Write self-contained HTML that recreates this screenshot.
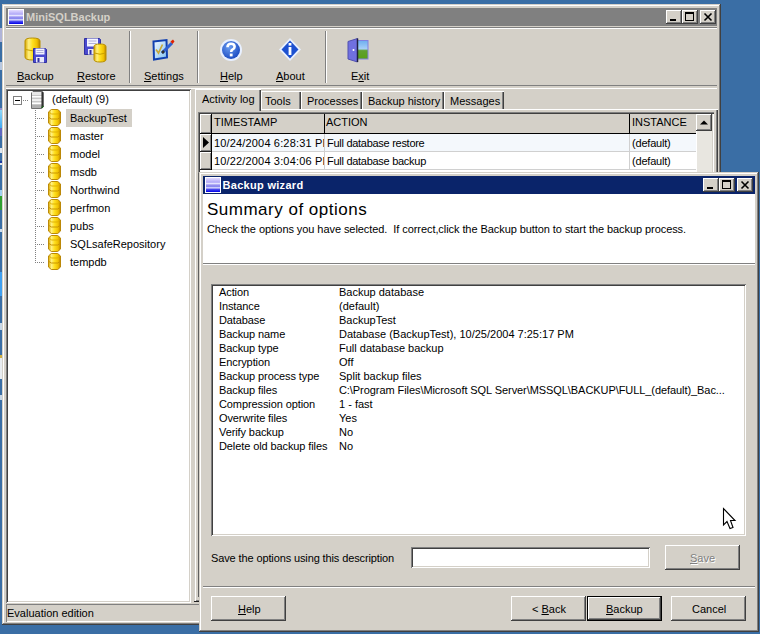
<!DOCTYPE html>
<html><head><meta charset="utf-8">
<style>
*{margin:0;padding:0;box-sizing:border-box}
html,body{width:760px;height:634px;overflow:hidden;background:#3A6EA5;font-family:"Liberation Sans",sans-serif;font-size:11px;color:#000}
.a{position:absolute}
.face{background:#D4D0C8}
.win{box-shadow:inset -1px -1px #404040,inset 1px 1px #D4D0C8,inset -2px -2px #808080,inset 2px 2px #FFFFFF;background:#D4D0C8}
.btn{box-shadow:inset -1px -1px #404040,inset 1px 1px #FFFFFF,inset -2px -2px #808080,inset 2px 2px #D4D0C8;background:#D4D0C8}
.sunk{box-shadow:inset 1px 1px #808080,inset -1px -1px #FFFFFF,inset 2px 2px #404040,inset -2px -2px #D4D0C8;background:#fff}
.t{position:absolute;white-space:nowrap;line-height:13px}
.cap{position:absolute;width:16px;height:14px}
u{text-decoration:underline;text-decoration-thickness:1px;text-underline-offset:1px}
</style></head><body>

<svg width="0" height="0" style="position:absolute">
<defs>
 <linearGradient id="gold" x1="0" y1="0" x2="1" y2="0">
  <stop offset="0" stop-color="#D8A800"/><stop offset=".25" stop-color="#FFF080"/><stop offset=".5" stop-color="#FFE020"/><stop offset=".8" stop-color="#F0C000"/><stop offset="1" stop-color="#B88000"/>
 </linearGradient>
 <linearGradient id="silver" x1="0" y1="0" x2="1" y2="0">
  <stop offset="0" stop-color="#909090"/><stop offset=".4" stop-color="#E8E8E8"/><stop offset="1" stop-color="#A0A0A0"/>
 </linearGradient>
 <symbol id="db" viewBox="0 0 14 17">
  <path d="M3.5 0.5 L10.5 0.5 L13.5 3 L13.5 14 L10.5 16.5 L3.5 16.5 L0.5 14 L0.5 3 Z" fill="url(#gold)" stroke="#B88400" stroke-width="1"/>
  <path d="M1.5 3.5 L4 5 L10 5 L12.5 3.5" fill="none" stroke="#E0B000" stroke-width="1"/>
  <path d="M1 8.5 L3.5 10 L10.5 10 L13 8.5" fill="none" stroke="#C89400" stroke-width="1"/>
 </symbol>
</defs></svg>
<!-- desktop icon fragments -->
<div class="a" style="left:0;top:28px;width:2px;height:14px;background:#B0B4D8"></div>
<div class="a" style="left:0;top:62px;width:2px;height:8px;background:#B8C8E0"></div>
<div class="a" style="left:0;top:108px;width:2px;height:2px;background:#9090D0"></div>
<div class="a" style="left:0;top:110px;width:2px;height:18px;background:linear-gradient(#90D8F8,#40A8F0)"></div>
<div class="a" style="left:0;top:128px;width:2px;height:8px;background:#6068C0"></div>
<div class="a" style="left:0;top:148px;width:2px;height:5px;background:#E0E8F0"></div>
<div class="a" style="left:0;top:161px;width:2px;height:2px;background:#1838A0"></div>
<div class="a" style="left:0;top:163px;width:2px;height:2px;background:#E0E8F0"></div>
<div class="a" style="left:0;top:190px;width:2px;height:6px;background:#A0D0F0"></div>
<div class="a" style="left:0;top:196px;width:2px;height:14px;background:#30A030"></div>
<div class="a" style="left:0;top:229px;width:2px;height:3px;background:#D0E0F0"></div>
<div class="a" style="left:0;top:272px;width:2px;height:24px;background:#40A0F0"></div>
<div class="a" style="left:0;top:323px;width:2px;height:7px;background:#C8D8E8"></div>
<div class="a" style="left:0;top:355px;width:2px;height:3px;background:#D0B040"></div>
<div class="a" style="left:0;top:358px;width:2px;height:21px;background:#E8ECF0"></div>
<div class="a" style="left:0;top:395px;width:2px;height:5px;background:#C8D8E8"></div>
<!-- ============ MAIN WINDOW ============ -->
<div class="a win" style="left:2px;top:4px;width:719px;height:621px"></div>
<!-- title bar -->
<div class="a" style="left:6px;top:8px;width:711px;height:18px;background:#808080"></div>
<svg class="a" style="left:8px;top:9px" width="16" height="16" viewBox="0 0 16 16">
 <defs><linearGradient id="ig" x1="0" y1="0" x2="0" y2="1"><stop offset="0" stop-color="#E4DCFF"/><stop offset=".3" stop-color="#B0A8F8"/><stop offset=".4" stop-color="#E8E8FF"/><stop offset=".5" stop-color="#9890F0"/><stop offset=".62" stop-color="#8888F0"/><stop offset=".7" stop-color="#E4E4FF"/><stop offset=".8" stop-color="#5050F0"/><stop offset="1" stop-color="#0000E8"/></linearGradient></defs>
 <rect x="0" y="0" width="16" height="16" fill="#fff"/><rect x="1" y="1" width="14" height="14" fill="url(#ig)"/>
</svg>
<div class="t" style="left:26px;top:11px;font-weight:bold;color:#D4D0C8">MiniSQLBackup</div>
<!-- caption buttons -->
<div class="cap btn" style="left:666px;top:10px"></div>
<div class="a" style="left:670px;top:19px;width:6px;height:2px;background:#000"></div>
<div class="cap btn" style="left:682px;top:10px"></div>
<div class="a" style="left:685px;top:12px;width:9px;height:9px;border:1px solid #000;border-top-width:2px"></div>
<div class="cap btn" style="left:700px;top:10px"></div>
<svg class="a" style="left:700px;top:10px" width="16" height="14"><path d="M4.5 3.5 L11.5 10.5 M11.5 3.5 L4.5 10.5" stroke="#000" stroke-width="1.6"/></svg>

<!-- toolbar etched top -->
<div class="a" style="left:6px;top:27px;width:711px;height:1px;background:#808080"></div>
<div class="a" style="left:6px;top:28px;width:711px;height:1px;background:#fff"></div>
<!-- toolbar bottom etched -->
<div class="a" style="left:6px;top:85px;width:711px;height:1px;background:#808080"></div>
<div class="a" style="left:6px;top:88px;width:711px;height:1px;background:#fff"></div>
<!-- separators -->
<div class="a" style="left:129px;top:31px;width:1px;height:52px;background:#808080"></div>
<div class="a" style="left:130px;top:31px;width:1px;height:52px;background:#fff"></div>
<div class="a" style="left:197px;top:31px;width:1px;height:52px;background:#808080"></div>
<div class="a" style="left:198px;top:31px;width:1px;height:52px;background:#fff"></div>
<div class="a" style="left:325px;top:31px;width:1px;height:52px;background:#808080"></div>
<div class="a" style="left:326px;top:31px;width:1px;height:52px;background:#fff"></div>

<!-- toolbar labels -->
<div class="t" style="left:17px;top:70px"><u>B</u>ackup</div>
<div class="t" style="left:77px;top:70px"><u>R</u>estore</div>
<div class="t" style="left:144px;top:70px"><u>S</u>ettings</div>
<div class="t" style="left:220px;top:70px"><u>H</u>elp</div>
<div class="t" style="left:276px;top:70px"><u>A</u>bout</div>
<div class="t" style="left:351px;top:70px">E<u>x</u>it</div>


<!-- Backup icon -->
<svg class="a" style="left:24px;top:37px" width="24" height="26" viewBox="0 0 24 26">
 <path d="M1 4 Q1 1 8.5 1 Q16 1 16 4 L16 20 Q16 23 8.5 23 Q1 23 1 20Z" fill="url(#gold)" stroke="#B89000" stroke-width="1"/>
 <path d="M1.5 12.5 Q8.5 15 15.5 12.5" fill="none" stroke="#C8A000" stroke-width="1"/>
 <path d="M9.5 11.5 L21.5 11.5 L22.5 12.5 L22.5 25.5 L9.5 25.5Z" fill="#4A4ACF" stroke="#3030A0" stroke-width="1"/>
 <rect x="11.5" y="11.5" width="9" height="6" fill="#F4F4FF"/>
 <path d="M12.5 13.5 h7 M12.5 15.5 h7" stroke="#A0A0D0" stroke-width="0.8"/>
 <rect x="12" y="20" width="8" height="5.5" fill="#E8E8F8"/>
 <rect x="13.5" y="21" width="2" height="4" fill="#3030A0"/>
</svg>
<!-- Restore icon -->
<svg class="a" style="left:84px;top:37px" width="24" height="26" viewBox="0 0 24 26">
 <path d="M0.5 1.5 L15.5 1.5 L16.5 2.5 L16.5 17.5 L0.5 17.5Z" fill="#4A4ACF" stroke="#3030A0" stroke-width="1"/>
 <rect x="3" y="1.5" width="11" height="8" fill="#F4F4FF"/>
 <path d="M4.5 4 h8 M4.5 6.5 h8" stroke="#A0A0D0" stroke-width="0.8"/>
 <rect x="4" y="12" width="8" height="5.5" fill="#E8E8F8"/>
 <rect x="5.5" y="13" width="2" height="4.5" fill="#3030A0"/>
 <path d="M10 9.5 Q10 7 16 7 Q22 7 22 9.5 L22 22.5 Q22 25 16 25 Q10 25 10 22.5Z" fill="url(#gold)" stroke="#B89000" stroke-width="1"/>
 <path d="M10.5 16 Q16 18.5 21.5 16" fill="none" stroke="#C8A000" stroke-width="1"/>
</svg>
<!-- Settings icon -->
<svg class="a" style="left:150px;top:37px" width="26" height="26" viewBox="0 0 26 26">
 <defs><linearGradient id="sbox" x1="0" y1="0" x2="1" y2="1"><stop offset="0" stop-color="#F4FAFF"/><stop offset="1" stop-color="#80C0F0"/></linearGradient></defs>
 <path d="M3.5 4.5 L16.5 3 L17 20.5 L4 22.5Z" fill="url(#sbox)" stroke="#1040B0" stroke-width="2"/>
 <path d="M6 12.5 L8.5 16 L12.5 7.5" fill="none" stroke="#C8A838" stroke-width="1.7"/>
 <path d="M12 16 L22 6" stroke="#3060D0" stroke-width="3"/>
 <path d="M12 16 L14 14" stroke="#303030" stroke-width="2.5"/>
 <path d="M20.5 4.5 L23 2.5 L24.5 4.5 L22.5 7Z" fill="#E02000"/>
</svg>
<!-- Help icon -->
<svg class="a" style="left:219px;top:38px" width="24" height="24" viewBox="0 0 24 24">
 <defs><radialGradient id="hb" cx=".4" cy=".35" r=".7"><stop offset="0" stop-color="#6A9CF0"/><stop offset="1" stop-color="#1848C0"/></radialGradient></defs>
 <circle cx="12" cy="12" r="11" fill="#E8F0FF"/>
 <circle cx="12" cy="12" r="9" fill="url(#hb)"/>
 <path d="M8.5 9.2 Q8.5 5.8 12 5.8 Q15.6 5.8 15.6 8.8 Q15.6 10.6 13.4 11.6 Q12.2 12.2 12.2 14" fill="none" stroke="#fff" stroke-width="2.6"/>
 <rect x="10.8" y="15.6" width="2.8" height="2.8" fill="#fff"/>
</svg>
<!-- About icon -->
<svg class="a" style="left:278px;top:37px" width="24" height="25" viewBox="0 0 24 25">
 <path d="M12 1 L23 12.5 L12 24 L1 12.5Z" fill="#E8F0FF"/>
 <path d="M12 3.5 L20.5 12.5 L12 21.5 L3.5 12.5Z" fill="#1C50D0"/>
 <rect x="10.6" y="10" width="2.8" height="8" fill="#fff"/>
 <rect x="10.6" y="6" width="2.8" height="2.6" fill="#fff"/>
</svg>
<!-- Exit icon -->
<svg class="a" style="left:346px;top:37px" width="24" height="26" viewBox="0 0 24 26">
 <defs><linearGradient id="sky" x1="0" y1="0" x2="0" y2="1"><stop offset="0" stop-color="#70B0F0"/><stop offset=".45" stop-color="#A8D0F8"/><stop offset=".55" stop-color="#60A030"/><stop offset="1" stop-color="#58A018"/></linearGradient></defs>
 <rect x="11" y="3" width="11.5" height="19.5" fill="#8080E0"/>
 <rect x="12" y="4" width="9.5" height="17.5" fill="url(#sky)"/>
 <path d="M2 4.5 L11.5 1.5 L11.5 25 L2 22Z" fill="#7070E0" stroke="#5050B0" stroke-width="1"/>
 <path d="M11.5 1.5 L11.5 25" stroke="#202040" stroke-width="1.5"/>
 <circle cx="7.5" cy="13" r="1" fill="#fff"/>
</svg>


<!-- tree view -->
<div class="a sunk" style="left:6px;top:89px;width:185px;height:514px"></div>


<!-- tree content -->
<div class="a" style="left:66px;top:109px;width:66px;height:18px;background:#D4D0C8"></div>

<div class="a" style="left:13px;top:96px;width:9px;height:9px;border:1px solid #808080;background:#fff"></div>
<div class="a" style="left:15px;top:100px;width:5px;height:1px;background:#000"></div>
<div class="a" style="left:23px;top:100px;width:6px;height:1px;background-image:linear-gradient(90deg,#808080 50%,transparent 50%);background-size:2px 1px"></div>
<div class="a" style="left:35px;top:108px;width:1px;height:155px;background-image:linear-gradient(180deg,#808080 50%,transparent 50%);background-size:1px 2px"></div>
<div class="a" style="left:35px;top:118px;width:9px;height:1px;background-image:linear-gradient(90deg,#808080 50%,transparent 50%);background-size:2px 1px"></div><svg class="a" style="left:48px;top:109px" width="13" height="17" viewBox="0 0 14 17" preserveAspectRatio="none"><use href="#db"/></svg><div class="t" style="left:70px;top:112px">BackupTest</div>
<div class="a" style="left:35px;top:136px;width:9px;height:1px;background-image:linear-gradient(90deg,#808080 50%,transparent 50%);background-size:2px 1px"></div><svg class="a" style="left:48px;top:127px" width="13" height="17" viewBox="0 0 14 17" preserveAspectRatio="none"><use href="#db"/></svg><div class="t" style="left:70px;top:130px">master</div>
<div class="a" style="left:35px;top:154px;width:9px;height:1px;background-image:linear-gradient(90deg,#808080 50%,transparent 50%);background-size:2px 1px"></div><svg class="a" style="left:48px;top:145px" width="13" height="17" viewBox="0 0 14 17" preserveAspectRatio="none"><use href="#db"/></svg><div class="t" style="left:70px;top:148px">model</div>
<div class="a" style="left:35px;top:172px;width:9px;height:1px;background-image:linear-gradient(90deg,#808080 50%,transparent 50%);background-size:2px 1px"></div><svg class="a" style="left:48px;top:163px" width="13" height="17" viewBox="0 0 14 17" preserveAspectRatio="none"><use href="#db"/></svg><div class="t" style="left:70px;top:166px">msdb</div>
<div class="a" style="left:35px;top:190px;width:9px;height:1px;background-image:linear-gradient(90deg,#808080 50%,transparent 50%);background-size:2px 1px"></div><svg class="a" style="left:48px;top:181px" width="13" height="17" viewBox="0 0 14 17" preserveAspectRatio="none"><use href="#db"/></svg><div class="t" style="left:70px;top:184px">Northwind</div>
<div class="a" style="left:35px;top:208px;width:9px;height:1px;background-image:linear-gradient(90deg,#808080 50%,transparent 50%);background-size:2px 1px"></div><svg class="a" style="left:48px;top:199px" width="13" height="17" viewBox="0 0 14 17" preserveAspectRatio="none"><use href="#db"/></svg><div class="t" style="left:70px;top:202px">perfmon</div>
<div class="a" style="left:35px;top:226px;width:9px;height:1px;background-image:linear-gradient(90deg,#808080 50%,transparent 50%);background-size:2px 1px"></div><svg class="a" style="left:48px;top:217px" width="13" height="17" viewBox="0 0 14 17" preserveAspectRatio="none"><use href="#db"/></svg><div class="t" style="left:70px;top:220px">pubs</div>
<div class="a" style="left:35px;top:244px;width:9px;height:1px;background-image:linear-gradient(90deg,#808080 50%,transparent 50%);background-size:2px 1px"></div><svg class="a" style="left:48px;top:235px" width="13" height="17" viewBox="0 0 14 17" preserveAspectRatio="none"><use href="#db"/></svg><div class="t" style="left:70px;top:238px">SQLsafeRepository</div>
<div class="a" style="left:35px;top:262px;width:9px;height:1px;background-image:linear-gradient(90deg,#808080 50%,transparent 50%);background-size:2px 1px"></div><svg class="a" style="left:48px;top:253px" width="13" height="17" viewBox="0 0 14 17" preserveAspectRatio="none"><use href="#db"/></svg><div class="t" style="left:70px;top:256px">tempdb</div>

<svg class="a" style="left:31px;top:91px" width="14" height="18" viewBox="0 0 14 18">
 <path d="M0.5 2 L2 0.5 L11.5 0.5 L12.5 1.5 L12.5 15.5 L10.5 17.5 L0.5 17.5Z" fill="#C8C8C8" stroke="#707070" stroke-width="1"/>
 <rect x="1" y="1" width="10" height="3" fill="#E8E8E8"/>
 <rect x="1" y="5" width="10" height="1.5" fill="#FFFFFF"/>
 <rect x="1" y="8" width="10" height="2" fill="#F0F0F0"/>
 <rect x="1" y="11.5" width="10" height="1.5" fill="#FFFFFF"/>
 <rect x="1" y="14" width="10" height="3" fill="#B0B0B0"/>
 <path d="M11.2 1 L11.2 16.8" stroke="#202020" stroke-width="1.4"/>
 <path d="M10.5 17 L12.5 15" stroke="#206020" stroke-width="1.2"/>
</svg>
<div class="t" style="left:52px;top:93px">(default) (9)</div>

<!-- status bar -->
<div class="a" style="left:6px;top:604px;width:711px;height:18px;box-shadow:inset 1px 1px #808080,inset -1px -1px #fff"></div>
<div class="t" style="left:7px;top:607px">Evaluation edition</div>

<!-- tab control -->
<div class="a" style="left:195px;top:109px;width:523px;height:493px;box-shadow:inset 1px 1px #fff,inset -1px -1px #404040,inset -2px -2px #808080"></div>


<!-- tabs -->
<div class="a" style="left:261px;top:91px;width:40px;height:18px;box-shadow:inset 1px 1px #fff,inset -1px 0 #404040,inset -2px 0 #808080;background:#D4D0C8"></div>
<div class="t" style="left:265px;top:95px">Tools</div>
<div class="a" style="left:301px;top:91px;width:61px;height:18px;box-shadow:inset 1px 1px #fff,inset -1px 0 #404040,inset -2px 0 #808080;background:#D4D0C8"></div>
<div class="t" style="left:307px;top:95px">Processes</div>
<div class="a" style="left:362px;top:91px;width:82px;height:18px;box-shadow:inset 1px 1px #fff,inset -1px 0 #404040,inset -2px 0 #808080;background:#D4D0C8"></div>
<div class="t" style="left:368px;top:95px">Backup history</div>
<div class="a" style="left:444px;top:91px;width:60px;height:18px;box-shadow:inset 1px 1px #fff,inset -1px 0 #404040,inset -2px 0 #808080;background:#D4D0C8"></div>
<div class="t" style="left:450px;top:95px">Messages</div>
<div class="a" style="left:195px;top:89px;width:66px;height:22px;box-shadow:inset 1px 1px #fff,inset -1px 0 #404040,inset -2px 0 #808080;background:#D4D0C8"></div>
<div class="t" style="left:202px;top:93px">Activity log</div>
<!-- grid -->
<div class="a" style="left:198px;top:112px;width:516px;height:61px;background:#fff;box-shadow:inset 1px 1px #808080,inset 2px 2px #404040,inset -1px 0 #fff,inset -2px 0 #D4D0C8"></div>
<div class="a" style="left:200px;top:114px;width:496px;height:19px;background:#D4D0C8"></div>
<div class="a" style="left:200px;top:133px;width:496px;height:1px;background:#000"></div>
<div class="a" style="left:200px;top:114px;width:11px;height:19px;box-shadow:inset 1px 1px #fff,inset -1px -1px #808080"></div><div class="a" style="left:200px;top:134px;width:11px;height:17px;background:#D4D0C8;box-shadow:inset 1px 1px #fff,inset -1px -1px #808080"></div><div class="a" style="left:200px;top:152px;width:11px;height:17px;background:#D4D0C8;box-shadow:inset 1px 1px #fff,inset -1px -1px #808080"></div>
<div class="a" style="left:211px;top:114px;width:1px;height:56px;background:#000"></div>
<div class="a" style="left:200px;top:151px;width:11px;height:1px;background:#202020"></div>
<div class="a" style="left:200px;top:169px;width:11px;height:1px;background:#202020"></div>
<div class="a" style="left:212px;top:134px;width:484px;height:17px;background:#F4F8FC"></div>
<div class="a" style="left:212px;top:151px;width:484px;height:1px;background:#D0D0D0"></div>
<div class="a" style="left:212px;top:169px;width:484px;height:1px;background:#D0D0D0"></div>
<div class="a" style="left:324px;top:114px;width:1px;height:19px;background:#000"></div>
<div class="a" style="left:324px;top:134px;width:1px;height:36px;background:#D0D0D0"></div>
<div class="a" style="left:629px;top:114px;width:1px;height:19px;background:#000"></div>
<div class="a" style="left:629px;top:134px;width:1px;height:36px;background:#D0D0D0"></div>
<svg class="a" style="left:203px;top:137px" width="7" height="11"><path d="M0 0 L6 5.5 L0 11Z" fill="#000"/></svg>
<div class="t" style="left:214px;top:116px">TIMESTAMP</div>
<div class="t" style="left:326px;top:116px">ACTION</div>
<div class="t" style="left:632px;top:116px">INSTANCE</div>
<div class="a" style="left:212px;top:134px;width:112px;height:36px;overflow:hidden"><div class="t" style="left:2px;top:0px;line-height:18px;letter-spacing:0.16px">10/24/2004 6:28:31 PM<br>10/22/2004 3:04:06 PM</div></div>
<div class="t" style="left:327px;top:134px;line-height:18px;letter-spacing:-0.28px">Full database restore<br>Full database backup</div>
<div class="t" style="left:632px;top:134px;line-height:18px;letter-spacing:-0.2px">(default)<br>(default)</div>
<!-- scrollbar -->
<div class="a" style="left:696px;top:114px;width:16px;height:58px;background:#E8E6E0;box-shadow:inset 1px 0 #fff"></div>
<div class="a btn" style="left:696px;top:114px;width:16px;height:17px"></div>
<svg class="a" style="left:696px;top:114px" width="16" height="17"><path d="M4 10.5 L12 10.5 L8 6.5Z" fill="#000"/></svg>

<div class="a" style="left:198px;top:173px;width:1px;height:424px;background:#606060"></div>
<div class="a" style="left:194px;top:601px;width:5px;height:1px;background:#202020"></div>
<!-- ============ WIZARD ============ -->
<div class="a win" style="left:199px;top:172px;width:560px;height:460px"></div>
<div class="a" style="left:203px;top:176px;width:552px;height:18px;background:#0A246A"></div>


<svg class="a" style="left:205px;top:177px" width="16" height="16" viewBox="0 0 16 16">
 <rect x="0" y="0" width="16" height="16" fill="#fff"/><rect x="1" y="1" width="14" height="14" fill="url(#ig)"/>
</svg>
<div class="t" style="left:222.5px;top:178.5px;font-weight:bold;color:#fff;letter-spacing:0.3px">Backup wizard</div>
<div class="cap btn" style="left:703px;top:178px"></div>
<div class="a" style="left:707px;top:187px;width:6px;height:2px;background:#000"></div>
<div class="cap btn" style="left:719px;top:178px"></div>
<div class="a" style="left:722px;top:180px;width:9px;height:9px;border:1px solid #000;border-top-width:2px"></div>
<div class="cap btn" style="left:737px;top:178px"></div>
<svg class="a" style="left:737px;top:178px" width="16" height="14"><path d="M4.5 3.5 L11.5 10.5 M11.5 3.5 L4.5 10.5" stroke="#000" stroke-width="1.6"/></svg>
<!-- header -->
<div class="a" style="left:203px;top:194px;width:552px;height:69px;background:#fff"></div>
<div class="a" style="left:203px;top:263px;width:552px;height:1px;background:#808080"></div>
<div class="a" style="left:203px;top:264px;width:552px;height:1px;background:#fff"></div>
<div class="t" style="left:207px;top:200px;font-size:17px;line-height:20px;letter-spacing:0.5px">Summary of options</div>
<div class="t" style="left:207px;top:223px;letter-spacing:-0.07px">Check the options you have selected.&nbsp; If correct,click the Backup button to start the backup process.</div>
<!-- listbox -->
<div class="a sunk" style="left:211px;top:284px;width:535px;height:252px"></div>
<div class="t" style="left:219px;top:285px;line-height:14px;letter-spacing:-0.1px">Action<br>Instance<br>Database<br>Backup name<br>Backup type<br>Encryption<br>Backup process type<br>Backup files<br>Compression option<br>Overwrite files<br>Verify backup<br>Delete old backup files</div>
<div class="t" style="left:339px;top:285px;line-height:14px">Backup database<br>(default)<br>BackupTest<br>Database (BackupTest), 10/25/2004 7:25:17 PM<br>Full database backup<br>Off<br>Split backup files<br><span style="letter-spacing:-0.07px">C:\Program Files\Microsoft SQL Server\MSSQL\BACKUP\FULL_(default)_Bac...</span><br>1 - fast<br>Yes<br>No<br>No</div>
<!-- save row -->
<div class="t" style="left:211px;top:552px;letter-spacing:-0.12px">Save the options using this description</div>
<div class="a sunk" style="left:411px;top:547px;width:239px;height:21px"></div>
<div class="a btn" style="left:665px;top:545px;width:75px;height:25px"></div>
<div class="t" style="left:690px;top:552px;color:#808080;text-shadow:1px 1px #fff"><u>S</u>ave</div>
<!-- separator -->
<div class="a" style="left:203px;top:586px;width:552px;height:1px;background:#808080"></div>
<div class="a" style="left:203px;top:587px;width:552px;height:1px;background:#fff"></div>
<!-- buttons -->
<div class="a btn" style="left:211px;top:596px;width:75px;height:25px"></div>
<div class="t" style="left:238px;top:603px"><u>H</u>elp</div>
<div class="a btn" style="left:511px;top:596px;width:75px;height:25px"></div>
<div class="t" style="left:532px;top:603px">&lt; <u>B</u>ack</div>
<div class="a" style="left:587px;top:596px;width:75px;height:25px;border:1px solid #000"></div>
<div class="a btn" style="left:588px;top:597px;width:73px;height:23px"></div>
<div class="t" style="left:606px;top:603px"><u>B</u>ackup</div>
<div class="a btn" style="left:671px;top:596px;width:75px;height:25px"></div>
<div class="t" style="left:692px;top:603px">Cancel</div>


<!-- cursor -->
<svg class="a" style="left:722px;top:507px" width="16" height="24" viewBox="0 0 16 24">
 <path d="M1.5 1.5 L1.5 18 L5 14.5 L8 21.5 L11 20.5 L8.5 13.5 L13 13.5 Z" fill="#fff" stroke="#000" stroke-width="1.1" stroke-linejoin="miter"/>
</svg>
</body></html>
